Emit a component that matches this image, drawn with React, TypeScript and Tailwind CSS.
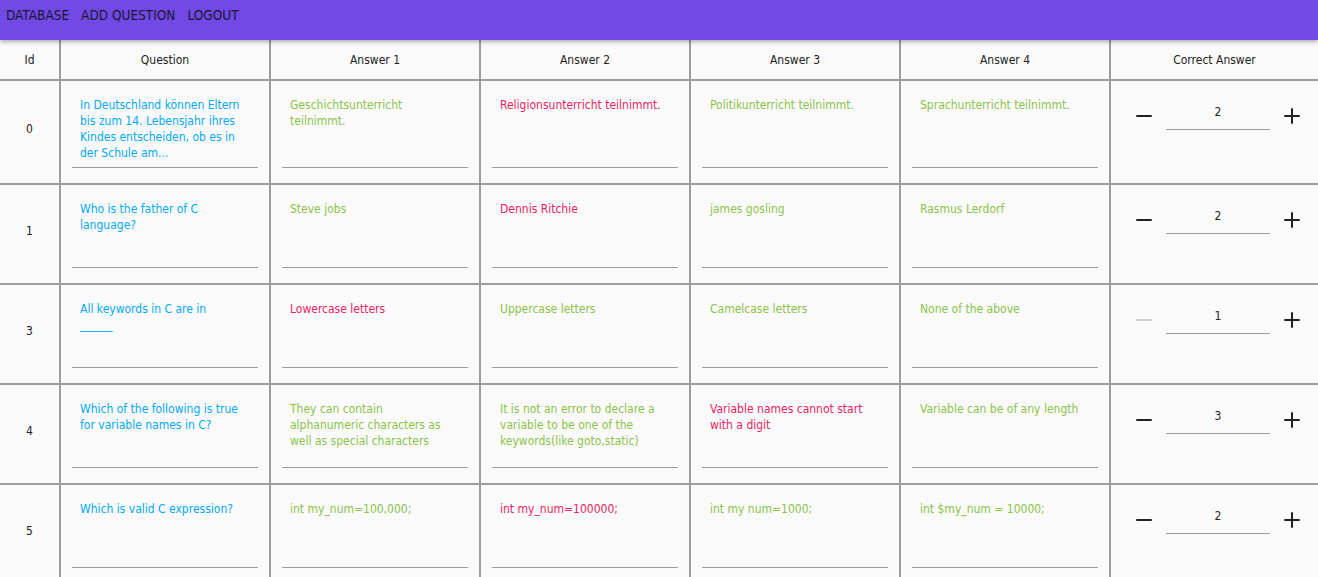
import { Minus, Plus } from "lucide-react";

const questions = [
  {
    id: 0,
    question: "In Deutschland können Eltern bis zum 14. Lebensjahr ihres Kindes entscheiden, ob es in der Schule am...",
    answers: ["Geschichtsunterricht teilnimmt.", "Religionsunterricht teilnimmt.", "Politikunterricht teilnimmt.", "Sprachunterricht teilnimmt."],
    correct: 2,
  },
  {
    id: 1,
    question: "Who is the father of C language?",
    answers: ["Steve jobs", "Dennis Ritchie", "james gosling", "Rasmus Lerdorf"],
    correct: 2,
  },
  {
    id: 3,
    question: "All keywords in C are in\n______",
    answers: ["Lowercase letters", "Uppercase letters", "Camelcase letters", "None of the above"],
    correct: 1,
  },
  {
    id: 4,
    question: "Which of the following is true for variable names in C?",
    answers: [
      "They can contain alphanumeric characters as well as special characters",
      "It is not an error to declare a variable to be one of the keywords(like goto,static)",
      "Variable names cannot start with a digit",
      "Variable can be of any length",
    ],
    correct: 3,
  },
  {
    id: 5,
    question: "Which is valid C expression?",
    answers: ["int my_num=100,000;", "int my_num=100000;", "int my num=1000;", "int $my_num = 10000;"],
    correct: 2,
  },
];

const headers = ["Id", "Question", "Answer 1", "Answer 2", "Answer 3", "Answer 4", "Correct Answer"];

function TextCell({ text, color }: { text: string; color: string }) {
  return (
    <div className="bg-[#fafafa] flex flex-col px-[11px] pt-[16px] pb-[15px] min-h-[98px]">
      <div className={`flex-1 px-2 pb-[6px] text-[12px] leading-4 whitespace-pre-line break-words ${color}`}>
        {text}
      </div>
      <div className="border-b border-[#9e9e9e]" />
    </div>
  );
}

export default function App() {
  return (
    <div className="min-h-screen bg-[#fafafa] text-[#222] [font-family:'DejaVu_Sans_Condensed','Liberation_Sans',sans-serif]">
      <nav className="relative z-10 h-10 bg-[#7149e6] shadow-[0_2px_4px_rgba(0,0,0,0.3)] flex items-start gap-[12px] px-[6px] pt-[5px] text-[13.5px] text-[#1c1630]">
        <a>DATABASE</a>
        <a>ADD QUESTION</a>
        <a>LOGOUT</a>
      </nav>

      <div className="grid grid-cols-[59px_208px_208px_208px_208px_208px_1fr] gap-[2px] bg-[#9e9e9e]">
        {headers.map((h) => (
          <div key={h} className="bg-[#fafafa] h-[39px] flex items-center justify-center pt-[1px] text-[12px]">
            {h}
          </div>
        ))}

        {questions.map((q) => (
          <div key={q.id} className="contents">
            <div className="bg-[#fafafa] flex items-center justify-center pb-[6px] text-[12px]">{q.id}</div>
            <TextCell text={q.question} color="text-[#03a9f4]" />
            {q.answers.map((a, i) => (
              <TextCell
                key={i}
                text={a}
                color={i + 1 === q.correct ? "text-[#e91e63]" : "text-[#8bc34a]"}
              />
            ))}
            <div className="bg-[#fafafa] pl-[21px] pt-[23px]">
              <div className="flex items-start">
                <Minus
                  size={24}
                  strokeWidth={2}
                  className={q.correct === 1 ? "text-[#cccccc]" : "text-[#222]"}
                />
                <div className="ml-[10px] w-[104px] h-[26px] border-b border-[#9e9e9e] text-center text-[12px] leading-4">
                  {q.correct}
                </div>
                <Plus size={24} strokeWidth={2} className="ml-[10px] text-[#222]" />
              </div>
            </div>
          </div>
        ))}
      </div>
    </div>
  );
}
